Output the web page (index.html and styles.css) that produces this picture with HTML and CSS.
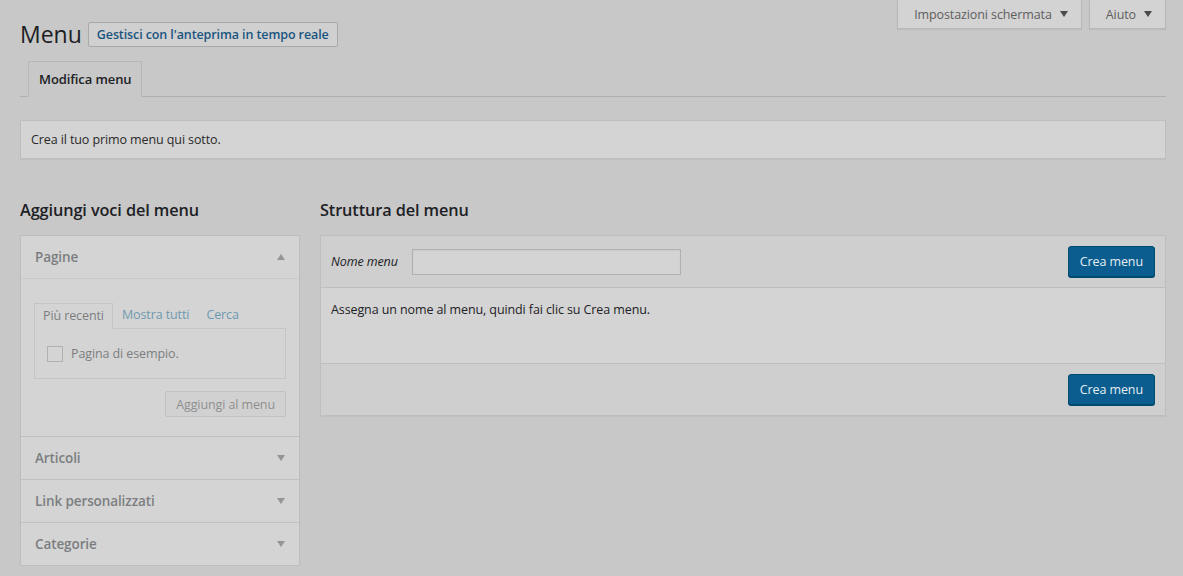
FILE: index.html
```html
<!DOCTYPE html>
<html lang="it">
<head>
    <meta charset="UTF-8">
    <meta name="viewport" content="width=device-width, initial-scale=1.0">
    <title>Menu</title>
    <link rel="stylesheet" href="styles.css">
</head>
<body>
    <div class="wrap">
        <!-- Header: title + screen options -->
        <div class="page-header">
            <div class="title-row">
                <h1>Menu</h1>
                <a class="page-title-action" href="#">Gestisci con l'anteprima in tempo reale</a>
            </div>
            <div class="screen-meta-links">
                <button class="meta-toggle">Impostazioni schermata <span class="caret"></span></button>
                <button class="meta-toggle">Aiuto <span class="caret"></span></button>
            </div>
        </div>

        <div class="nav-tabs">
            <a class="nav-tab active" href="#">Modifica menu</a>
        </div>

        <div class="notice">
            <p>Crea il tuo primo menu qui sotto.</p>
        </div>

        <div class="columns">
            <!-- Left: add menu items -->
            <div class="col-left">
                <h2>Aggiungi voci del menu</h2>
                <div class="accordion disabled">
                    <div class="acc-section open">
                        <div class="acc-title">Pagine <span class="arrow up"></span></div>
                        <div class="acc-content">
                            <div class="tabs">
                                <span class="tab current">Più recenti</span>
                                <span class="tab">Mostra tutti</span>
                                <span class="tab">Cerca</span>
                            </div>
                            <div class="tab-panel">
                                <label class="check-row"><span class="checkbox"></span> Pagina di esempio.</label>
                            </div>
                            <div class="acc-actions">
                                <button class="button-secondary">Aggiungi al menu</button>
                            </div>
                        </div>
                    </div>
                    <div class="acc-section">
                        <div class="acc-title">Articoli <span class="arrow"></span></div>
                    </div>
                    <div class="acc-section">
                        <div class="acc-title">Link personalizzati <span class="arrow"></span></div>
                    </div>
                    <div class="acc-section">
                        <div class="acc-title">Categorie <span class="arrow"></span></div>
                    </div>
                </div>
            </div>

            <!-- Right: menu structure -->
            <div class="col-right">
                <h2>Struttura del menu</h2>
                <div class="menu-edit">
                    <div class="menu-header">
                        <label class="menu-name-label" for="menu-name">Nome menu</label>
                        <input type="text" id="menu-name" class="menu-name">
                        <button class="button-primary">Crea menu</button>
                    </div>
                    <div class="menu-body">
                        <p>Assegna un nome al menu, quindi fai clic su Crea menu.</p>
                    </div>
                    <div class="menu-footer">
                        <button class="button-primary">Crea menu</button>
                    </div>
                </div>
            </div>
        </div>
    </div>
</body>
</html>
```

FILE: styles.css
```css
body {
    margin: 0;
    background-color: #c8c8c8;
    font-family: "Open Sans", "Noto Sans", sans-serif;
    font-size: 12.5px;
    letter-spacing: -0.1px;
    color: #1d2125;
}

.wrap {
    padding: 0 17px 0 20px;
}

.page-header {
    display: flex;
    justify-content: space-between;
    align-items: flex-start;
}

.title-row {
    display: flex;
    align-items: center;
    margin-top: 22px;
}

h1 {
    margin: 0 6px 0 0;
    font-size: 23px;
    font-weight: 400;
    line-height: 25px;
    letter-spacing: 0;
    color: #1d2125;
}

.page-title-action {
    display: inline-block;
    height: 23px;
    line-height: 23px;
    padding: 0 8px;
    border: 1px solid #a9a9a9;
    border-radius: 2px;
    background: #d0d0d0;
    color: #1a5580;
    font-size: 12.5px;
    font-weight: 600;
    text-decoration: none;
}

.screen-meta-links {
    display: flex;
    gap: 7px;
}

.meta-toggle {
    display: flex;
    align-items: center;
    height: 29px;
    padding: 0 13px 0 16px;
    border: 1px solid #b7b7b7;
    border-top: none;
    background: #d3d3d3;
    box-shadow: 0 1px 1px rgba(0, 0, 0, 0.05);
    font-family: inherit;
    font-size: 12.5px;
    letter-spacing: -0.1px;
    color: #5e5e5e;
}

.caret {
    width: 0;
    height: 0;
    margin-left: 8px;
    border-left: 4px solid transparent;
    border-right: 4px solid transparent;
    border-top: 6px solid #4a4a4a;
}

.nav-tabs {
    display: flex;
    margin-top: 14px;
    padding-left: 8px;
    border-bottom: 1px solid #b0b0b0;
}

.nav-tab {
    margin-bottom: -1px;
    padding: 0 10px;
    height: 34px;
    line-height: 34px;
    border: 1px solid #b7b7b7;
    border-bottom: 1px solid #c8c8c8;
    background: #c8c8c8;
    color: #1d2125;
    font-size: 13px;
    font-weight: 600;
    text-decoration: none;
}

.notice {
    margin-top: 23px;
    border: 1px solid #bebebe;
    background: #d4d4d4;
    box-shadow: 0 1px 1px rgba(0, 0, 0, 0.04);
}

.notice p {
    margin: 0;
    padding: 0 10px;
    height: 37px;
    line-height: 37px;
    color: #2a2a2a;
}

.columns {
    display: flex;
    gap: 20px;
    margin-top: 39px;
}

.col-left {
    width: 280px;
    flex-shrink: 0;
}

.col-right {
    flex: 1;
}

h2 {
    margin: 0 0 13px;
    font-size: 16.3px;
    font-weight: 600;
    line-height: 24px;
    color: #1d2125;
}

/* accordion */
.accordion {
    border: 1px solid #bebebe;
    background: #d4d4d4;
    box-shadow: 0 1px 1px rgba(0, 0, 0, 0.06);
}

.acc-section + .acc-section {
    border-top: 1px solid #c0c0c0;
}

.acc-title {
    display: flex;
    justify-content: space-between;
    align-items: center;
    height: 42px;
    padding: 0 14px;
    font-size: 13.5px;
    font-weight: 600;
    color: #23282d;
}

.disabled .acc-title,
.disabled .acc-content {
    opacity: 0.5;
}

.open .acc-title {
    border-bottom: 1px solid #c0c0c0;
}

.arrow {
    width: 0;
    height: 0;
    border-left: 4px solid transparent;
    border-right: 4px solid transparent;
    border-top: 6px solid #555;
}

.arrow.up {
    border-top: none;
    border-bottom: 6px solid #555;
}

.acc-content {
    padding: 24px 13px 19px;
}

.tabs {
    display: flex;
}

.tab {
    padding: 0 8px;
    height: 24px;
    line-height: 24px;
    color: #00608d;
}

.tab + .tab {
    margin-left: 1px;
}

.tab.current {
    border: 1px solid #b7b7b7;
    border-bottom: 1px solid #d4d4d4;
    margin-bottom: -1px;
    color: #23282d;
}

.tab-panel {
    height: 49px;
    border: 1px solid #b7b7b7;
    padding: 0 12px;
    display: flex;
    align-items: center;
}

.check-row {
    display: flex;
    align-items: center;
    gap: 8px;
    color: #23282d;
}

.checkbox {
    width: 14px;
    height: 14px;
    border: 1px solid #8f8f8f;
    background: #d4d4d4;
}

.acc-actions {
    display: flex;
    justify-content: flex-end;
    margin-top: 12px;
}

.button-secondary {
    height: 26px;
    padding: 0 10px;
    border: 1px solid #b0b0b0;
    border-radius: 2px;
    background: #d0d0d0;
    font-family: inherit;
    font-size: 12.5px;
    letter-spacing: -0.1px;
    color: #4a4a4a;
}

/* menu structure */
.menu-edit {
    border: 1px solid #bebebe;
    background: #d4d4d4;
    box-shadow: 0 1px 1px rgba(0, 0, 0, 0.04);
}

.menu-header,
.menu-footer {
    display: flex;
    align-items: center;
    height: 51px;
    padding: 0 10px;
    background: #cfcfcf;
}

.menu-header {
    border-bottom: 1px solid #bebebe;
}

.menu-footer {
    justify-content: flex-end;
    border-top: 1px solid #bebebe;
}

.menu-name-label {
    font-style: italic;
    margin-right: 14px;
    color: #1d2125;
}

.menu-name {
    width: 269px;
    height: 26px;
    box-sizing: border-box;
    border: 1px solid #b0b0b0;
    background: #d4d4d4;
    box-shadow: inset 0 1px 2px rgba(0, 0, 0, 0.05);
}

.menu-header .button-primary {
    margin-left: auto;
}

.button-primary {
    height: 31px;
    padding: 0 11px;
    border: 1px solid #004b70;
    border-radius: 3px;
    background: #0a5d8e;
    box-shadow: 0 1px 0 #004b70;
    color: #e6eef3;
    font-family: inherit;
    font-size: 12.5px;
    letter-spacing: -0.1px;
}

.menu-body {
    height: 75px;
}

.menu-body p {
    margin: 0;
    padding: 13px 10px;
}
```
